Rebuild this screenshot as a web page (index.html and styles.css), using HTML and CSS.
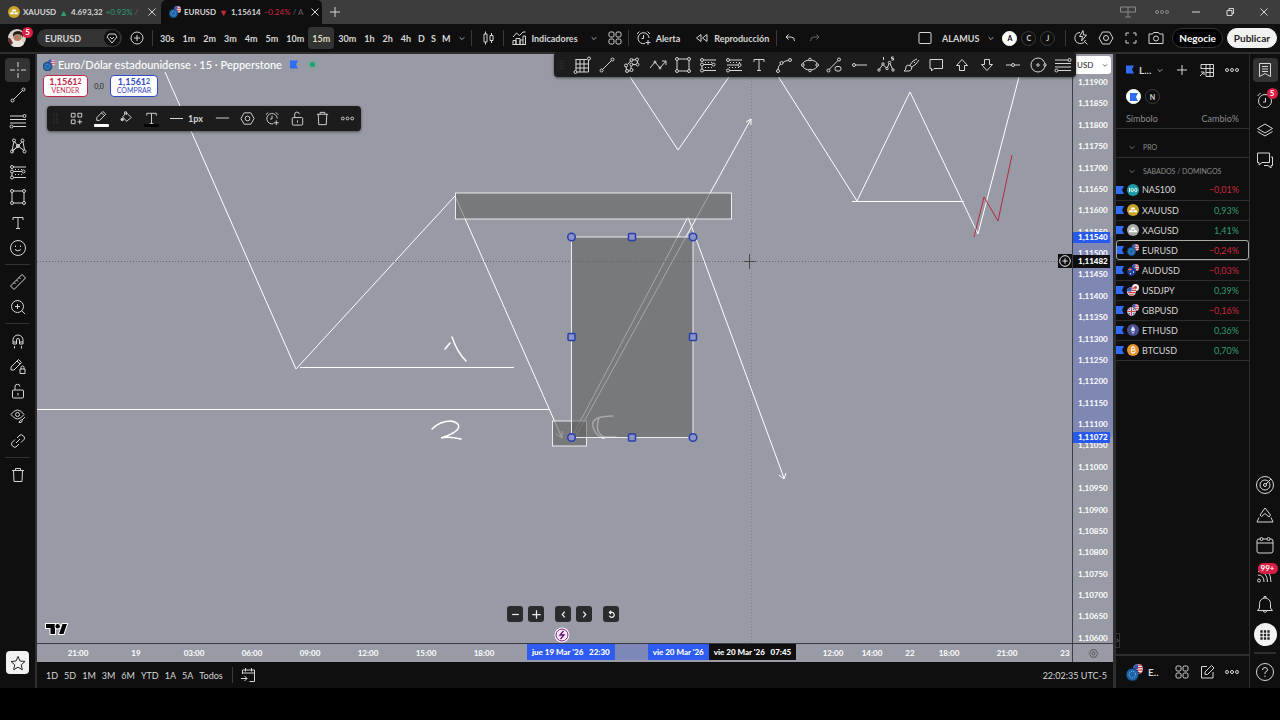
FILE: index.html
```html
<!DOCTYPE html>
<html lang="es">
<head>
    <meta charset="UTF-8">
    <meta name="viewport" content="width=device-width, initial-scale=1.0">
    <title>EURUSD 1,15614 −0.24%</title>
    <link rel="stylesheet" href="styles.css">
</head>
<body>
    <!-- Icon sprite -->
    <svg class="sprite" aria-hidden="true">
        <symbol id="i-cross" viewBox="0 0 18 18"><path d="M9 1v5M9 12v5M1 9h5M12 9h5M8 9h2"/></symbol>
        <symbol id="i-line" viewBox="0 0 18 18"><path d="M4.5 13.5l9-9"/><circle cx="3.5" cy="14.5" r="1.5"/><circle cx="14.5" cy="3.5" r="1.5"/></symbol>
        <symbol id="i-fib" viewBox="0 0 18 18"><path d="M1 4h13M1 7.500h16M1 11h16M4 14.500h13"/><circle cx="15.500" cy="4" r="1.500"/><circle cx="2.500" cy="14.500" r="1.500"/></symbol>
        <symbol id="i-pattern" viewBox="0 0 18 18"><path d="M3 13.500L5 4.500M3.500 14L13 5M5.500 4.500L8.500 8.500L15 13.500M14 4.500L15.500 13M3 14.500L9 9.500"/><circle cx="3" cy="14.500" r="1.500"/><circle cx="5" cy="3.500" r="1.500"/><circle cx="13.500" cy="3.500" r="1.500"/><circle cx="15.500" cy="14.500" r="1.500"/><circle cx="9" cy="9" r="1.500"/></symbol>
        <symbol id="i-long" viewBox="0 0 18 18"><path d="M4.500 4H17M4.500 8.500H13M4.500 14.500H17M3 10v3"/><path d="M6 6.500h9M6 11.500h9" stroke-dasharray="1 2"/><circle cx="3" cy="4" r="1.500"/><circle cx="3" cy="8.500" r="1.500"/><circle cx="14.500" cy="8.500" r="1.500"/><circle cx="3" cy="14.500" r="1.500"/></symbol>
        <symbol id="i-range" viewBox="0 0 18 18"><path d="M4.500 4H17M2 9h11M4.500 14.500H17"/><path d="M4 11.500h12M5 6.500h10" stroke-dasharray="1 2"/><circle cx="3" cy="4" r="1.500"/><circle cx="14.500" cy="9" r="1.500"/><circle cx="3" cy="14.500" r="1.500"/></symbol>
        <symbol id="i-rect" viewBox="0 0 18 18"><path d="M4.500 3h9M4.500 15h9M3 4.500v9M15 4.500v9"/><circle cx="3" cy="3" r="1.500"/><circle cx="15" cy="3" r="1.500"/><circle cx="3" cy="15" r="1.500"/><circle cx="15" cy="15" r="1.500"/></symbol>
        <symbol id="i-text" viewBox="0 0 18 18"><path d="M4 6V3.500h10V6M9 3.500v11M7 14.500h4"/></symbol>
        <symbol id="i-smile" viewBox="0 0 18 18"><circle cx="9" cy="9" r="7.500"/><path d="M6 10.500q3 3 6 0M6.500 6.500v1.500M11.500 6.500v1.500"/></symbol>
        <symbol id="i-ruler" viewBox="0 0 18 18"><path d="M1.500 13L13 1.500L16.500 5L5 16.500zM5 9.500l1.500 1.500M7.500 7l1.500 1.500M10 4.500l1.500 1.500"/></symbol>
        <symbol id="i-zoom" viewBox="0 0 18 18"><circle cx="8.500" cy="8.500" r="6"/><path d="M13 13l3 3M8.500 6v5M6 8.500h5"/></symbol>
        <symbol id="i-magnet" viewBox="0 0 18 18"><path d="M4 12V8a5 5 0 0 1 10 0v4h-3.500V8a1.500 1.500 0 0 0-3 0v4zM4 10h3.500M10.500 10H14M5.500 14v2.500M12.500 14v2.500"/></symbol>
        <symbol id="i-penlock" viewBox="0 0 18 18"><path d="M2 13v-3l7.500-7.500l3 3L5 13zM8 4l3 3M11 12h5v4.500h-5zM12 12v-1.500a1.500 1.500 0 0 1 3 0V12"/></symbol>
        <symbol id="i-lock" viewBox="0 0 18 18"><rect x="3.500" y="8" width="11" height="8" rx="1"/><path d="M6 8V5a2.500 2.500 0 0 1 5-.5M9 11v2.500"/></symbol>
        <symbol id="i-eye" viewBox="0 0 18 18"><path d="M2 7.500q6.500-9 13 0q-6.500 9-13 0z"/><circle cx="8.500" cy="7.500" r="2"/><path d="M10 15.500q1-3 3-2.500l3-3M10 15.500q3 .5 3.500-2"/></symbol>
        <symbol id="i-link" viewBox="0 0 18 18"><path d="M8 6l3-3q1.500-1 3.500 1t.500 3.500l-3 3M10 12l-3 3q-1.500 1-3.500-1T3 10.500l3-3M7 11l4-4"/></symbol>
        <symbol id="i-trash" viewBox="0 0 18 18"><path d="M3 4.500h12M6.500 4.500V2.500h5v2M4.500 4.500l.5 11h8l.5-11"/></symbol>
        <symbol id="i-star" viewBox="0 0 18 18"><path d="M9 2.500l2 4.500 5 .5-3.700 3.300 1 4.900L9 13.200l-4.300 2.500 1-4.900L2 7.500 7 7z"/></symbol>
        <symbol id="i-plus" viewBox="0 0 18 18"><path d="M9 4v10M4 9h10"/></symbol>
        <symbol id="i-pluscircle" viewBox="0 0 18 18"><circle cx="9" cy="9" r="6"/><path d="M9 6v6M6 9h6"/></symbol>
        <symbol id="i-diamond" viewBox="0 0 18 18"><circle cx="9" cy="9" r="8" fill="#0f0f0f" stroke="none"/><path d="M4 8l2-3h6l2 3-5 6zM7 8l2 2 2-2"/></symbol>
        <symbol id="i-down" viewBox="0 0 18 18"><path d="M6 8l3 3 3-3"/></symbol>
        <symbol id="i-left" viewBox="0 0 18 18"><path d="M10.500 5.500L7.500 9l3 3.500"/></symbol>
        <symbol id="i-right" viewBox="0 0 18 18"><path d="M7.500 5.500l3 3.500-3 3.500"/></symbol>
        <symbol id="i-minus" viewBox="0 0 18 18"><path d="M5 9h8"/></symbol>
        <symbol id="i-dash" viewBox="0 0 18 18"><path d="M2 8.500h14"/></symbol>
        <symbol id="i-reset" viewBox="0 0 18 18"><path d="M6.500 6.500H10a3 3 0 1 1-3.500 4M8.500 4.500l-2 2 2 2"/></symbol>
        <symbol id="i-close" viewBox="0 0 18 18"><path d="M5.500 5.500l7 7M12.500 5.500l-7 7"/></symbol>
        <symbol id="i-restore" viewBox="0 0 18 18"><path d="M6 7.500h5v5H6zM8 7.500v-2h4.500v5H11"/></symbol>
        <symbol id="i-layout" viewBox="0 0 18 18"><path d="M1.500 4h15v5h-15zM9 4v10M6 14h6"/></symbol>
        <symbol id="i-dots" viewBox="0 0 18 18"><circle cx="4" cy="9" r="1.500"/><circle cx="9" cy="9" r="1.500"/><circle cx="14" cy="9" r="1.500"/></symbol>
        <symbol id="i-candle" viewBox="0 0 18 18"><path d="M5 5h3v8H5zM6.500 2.500V5M6.500 13v2.500M11 6.500h3v5h-3zM12.500 4v2.500M12.500 11.500V14"/></symbol>
        <symbol id="i-ind" viewBox="0 0 18 18"><path d="M3 15.500v-4h3v4M6 15.500V9.500h4v6M10 15.500v-4M13 15.500V7h2.500v8.500M10 11h3M2.500 15.500h13.500M3 8l3.500-4 3 2.500L13 3h2.500"/></symbol>
        <symbol id="i-four" viewBox="0 0 18 18"><rect x="3" y="3" width="5" height="5" rx="1.500"/><rect x="10" y="3" width="5" height="5" rx="1.500"/><rect x="3" y="10" width="5" height="5" rx="1.500"/><rect x="10" y="10" width="5" height="5" rx="1.500"/></symbol>
        <symbol id="i-alarm" viewBox="0 0 18 18"><path d="M10 14.500A5.500 5.500 0 1 1 14 9M8.500 6v3.500H6.500M2 5l2.500-2.500M12.500 2.500L15 5M13 11v5M10.500 13.500h5"/></symbol>
        <symbol id="i-clock" viewBox="0 0 18 18"><circle cx="9" cy="10" r="6.500"/><path d="M9.500 7v4H7M1.500 5l3-3"/></symbol>
        <symbol id="i-replay" viewBox="0 0 18 18"><path d="M8 5.500v7L3.500 9zM14 5.500v7L9.500 9z"/></symbol>
        <symbol id="i-undo" viewBox="0 0 18 18"><path d="M5 8h5q3.500 0 3.500 4M7.500 5.500L5 8l2.500 2.500"/></symbol>
        <symbol id="i-redo" viewBox="0 0 18 18"><path d="M13 8H8q-3.500 0-3.500 4M10.500 5.500L13 8l-2.500 2.500"/></symbol>
        <symbol id="i-box" viewBox="0 0 18 18"><rect x="3" y="3.500" width="12" height="11" rx="1"/></symbol>
        <symbol id="i-quick" viewBox="0 0 18 18"><path d="M8 3.500a5.500 5.500 0 1 0 5.500 7.500M12.500 12.500l3 3M11 1.500L7.500 7.500H10.500l-1 4.500L14.500 6H11.500z"/></symbol>
        <symbol id="i-hex" viewBox="0 0 18 18"><path d="M5.500 3h7L16 9l-3.500 6h-7L2 9z"/><circle cx="9" cy="9" r="2.500"/></symbol>
        <symbol id="i-full" viewBox="0 0 18 18"><path d="M4 7V4h3M11 4h3v3M14 11v3h-3M7 14H4v-3"/></symbol>
        <symbol id="i-camera" viewBox="0 0 18 18"><path d="M2 5h3.500l1-1.500h5l1 1.500H16v9.500H2z"/><circle cx="9" cy="9.500" r="2.500"/></symbol>
        <symbol id="i-gridbox" viewBox="0 0 18 18"><path d="M2.500 3.500H14M2.500 8h13M2.500 12h13M4 16h11.500M3 3v12M7 3v13M11 3v13M15.500 4v12"/><circle cx="16" cy="2.500" r="1.500"/><circle cx="2.500" cy="16" r="1.500"/></symbol>
        <symbol id="i-brushpath" viewBox="0 0 18 18"><path d="M3.500 13.500L3 10.500M4.500 8.500L8 4.500M9.500 4L13 3.500M14.500 5v2M13 8.500H9.500M8 10v3M5.500 15H7"/><circle cx="3" cy="9.500" r="1.500"/><circle cx="4" cy="15" r="1.500"/><circle cx="8.500" cy="14" r="1.500"/><circle cx="14" cy="3.500" r="1.500"/><circle cx="14.500" cy="8.500" r="1.500"/><circle cx="8.500" cy="8.500" r="1.500"/><circle cx="8.500" cy="4" r="1.500"/></symbol>
        <symbol id="i-zig" viewBox="0 0 18 18"><path d="M1 12l5-6 5 6 6-7M13 5h4v4"/><circle cx="6" cy="6" r="1"/><circle cx="11" cy="12" r="1"/></symbol>
        <symbol id="i-curve" viewBox="0 0 18 18"><path d="M3 13.500q0-3 2.500-5.500M8 6.500q2-2 5.500-2"/><circle cx="3" cy="15" r="1.500"/><circle cx="6.500" cy="7" r="1.500"/><circle cx="15" cy="4" r="1.500"/></symbol>
        <symbol id="i-ellipse" viewBox="0 0 18 18"><ellipse cx="9" cy="9" rx="7.500" ry="5"/><g fill="#1c1c1c"><circle cx="1.800" cy="9" r="1.300"/><circle cx="16.200" cy="9" r="1.300"/><circle cx="9" cy="3.500" r="1.300"/><circle cx="9" cy="14.500" r="1.300"/></g></symbol>
        <symbol id="i-lineshape" viewBox="0 0 18 18"><path d="M3 13.500l9-9"/><circle cx="2.500" cy="14.500" r="1.500"/><circle cx="13" cy="3.500" r="1.500"/><rect x="9" y="10.500" width="6" height="4.500" rx="2"/></symbol>
        <symbol id="i-ray" viewBox="0 0 18 18"><path d="M4.500 9H16"/><circle cx="3" cy="9" r="1.500"/></symbol>
        <symbol id="i-elliott" viewBox="0 0 18 18"><path d="M2.500 13L5.500 9M6.500 9l3 3M10.500 11.500l1.500-4M13 7.500l2.500 5.500M6.500 1v3M16.500 1h-2v1.500h2V4h-2"/><circle cx="2" cy="14" r="1.200"/><circle cx="6" cy="8" r="1.200"/><circle cx="10" cy="12.500" r="1.200"/><circle cx="12.500" cy="6.500" r="1.200"/><circle cx="16" cy="14" r="1.200"/></symbol>
        <symbol id="i-brush" viewBox="0 0 18 18"><path d="M2 15q2-1 2-4t5-1q2 4-2 5zM8 9l3-4 4-2M10 11l4-3 3-4M12 6l1 1"/></symbol>
        <symbol id="i-callout" viewBox="0 0 18 18"><path d="M3 3.500h12.500v9H7L4.500 15v-2.500H3z"/></symbol>
        <symbol id="i-up" viewBox="0 0 18 18"><path d="M9 3.500L14.500 9.500H11.500v5h-5v-5h-3z"/></symbol>
        <symbol id="i-dn" viewBox="0 0 18 18"><path d="M9 14.500L14.500 8.500H11.500v-5h-5v5h-3z"/></symbol>
        <symbol id="i-hline" viewBox="0 0 18 18"><path d="M2 9h5.500M10.500 9H16"/><circle cx="9" cy="9" r="1.500"/></symbol>
        <symbol id="i-circle" viewBox="0 0 18 18"><circle cx="9" cy="9" r="7"/><circle cx="9" cy="9" r="1.200"/><circle cx="16" cy="9" r="1.200" fill="#1c1c1c"/></symbol>
        <symbol id="i-pencil" viewBox="0 0 18 18"><path d="M4 11V8l6.500-6.500L13.500 4.500L7 11zM9 3l3 3"/></symbol>
        <symbol id="i-bucket" viewBox="0 0 18 18"><path d="M5 7l4-4 5 5-5 4zM7 5V2h2v3"/><circle cx="4.500" cy="10" r="1.300" fill="currentColor"/></symbol>
        <symbol id="i-apps" viewBox="0 0 18 18"><path d="M3.500 3.500h4v4h-4zM10.500 3.500h4v4h-4zM3.500 10.500h4v4h-4zM12.500 10v5M10 12.500h5"/></symbol>
        <symbol id="i-grip" viewBox="0 0 18 18"><path d="M7.500 4v10M10.500 4v10" stroke-dasharray="1 2"/></symbol>
        <symbol id="i-goto" viewBox="0 0 18 18"><path d="M3.500 8V4h12v11.500h-5M3.500 7h12M6.500 2v3.500M12.500 2v3.500M2 12.500h6M5.500 10L8 12.500 5.500 15"/></symbol>
        <symbol id="i-note" viewBox="0 0 18 18"><path d="M9 3.500H3.500v11.500H15V9M7 11.500V9l6.500-6.500L16 5l-6.500 6.500z"/></symbol>
        <symbol id="i-table" viewBox="0 0 18 18"><path d="M3 8V3.500h12.500v12H8M3 7.500h12.500M8 11.500h7.500M8 3.500v12M12 3.500v12M2 15l4-4M3 11h3v3"/></symbol>
        <symbol id="i-list" viewBox="0 0 18 18"><path d="M3.500 2.500h11v13L9 12.500l-5.500 3zM6 5.500h6M6 8h6M6 10.500h6"/></symbol>
        <symbol id="i-layers" viewBox="0 0 18 18"><path d="M9 3l7.500 4.500L9 12 1.500 7.500zM1.500 10.500L9 15l7.500-4.500"/></symbol>
        <symbol id="i-chat" viewBox="0 0 18 18"><path d="M1.500 2h12v9.500H6L3 14v-2.500H1.500zM15 6h1.500v8.500H15V17l-3-2.500H8"/></symbol>
        <symbol id="i-target" viewBox="0 0 18 18"><circle cx="9" cy="9" r="8.500"/><circle cx="9" cy="9" r="5"/><circle cx="9" cy="9" r="1.500"/><path d="M10 8l5-5"/></symbol>
        <symbol id="i-pyramid" viewBox="0 0 18 18"><path d="M9 2L4 9l1.500 1.500L9 7.500l4 3.500 1.500-2zM3 11.500L1 16h16l-2-4.500"/></symbol>
        <symbol id="i-cal" viewBox="0 0 18 18"><rect x="1" y="3" width="16" height="14" rx="2"/><path d="M1 7h16"/><circle cx="5.500" cy="3" r="1.500" fill="#0f0f0f"/><circle cx="12.500" cy="3" r="1.500" fill="#0f0f0f"/></symbol>
        <symbol id="i-feed" viewBox="0 0 18 18"><circle cx="3" cy="14.500" r="1.500"/><path d="M2 9q6 0 6 7M2 5.500q9.500 0 9.500 10.500M2 2q13 0 13 14"/></symbol>
        <symbol id="i-bell" viewBox="0 0 18 18"><path d="M1.500 14.500h15L14.500 12V7.500a5.500 5.500 0 0 0-11 0V12zM7 15q2 3 4 0M8 2V.5h2V2"/></symbol>
        <symbol id="i-help" viewBox="0 0 18 18"><circle cx="9" cy="9" r="8.500"/><path d="M6.500 7q0-2.500 2.500-2.500T11.500 7Q11.500 8 9 9.500V11M9 12.500V14"/></symbol>
        <symbol id="i-nine" viewBox="0 0 18 18"><path d="M3 4.500h12M3 9h12M3 13.500h12" stroke-width="3" stroke-dasharray="3 1.500"/></symbol>

        <symbol id="c-gold" viewBox="0 0 12 12"><circle cx="6" cy="6" r="6" fill="#c9a227"/><path d="M4.500 3.500h3l.8 2h-4.600zM2.500 6.200h3l.5 2H1.800zM6.600 6.200h3l.6 2H6.200z" fill="#fff"/></symbol>
        <symbol id="c-silver" viewBox="0 0 12 12"><circle cx="6" cy="6" r="6" fill="#a9abad"/><path d="M4.500 3.500h3l.8 2h-4.600zM2.500 6.200h3l.5 2H1.800zM6.600 6.200h3l.6 2H6.200z" fill="#fff"/></symbol>
        <symbol id="c-us" viewBox="0 0 8 8"><circle cx="4" cy="4" r="4" fill="#eee"/><path d="M4 1h3M4 3h4M1 5h7M2 7h4" stroke="#d33b4b"/><path d="M0 4a4 4 0 0 1 4-4v4z" fill="#3655b5"/></symbol>
        <symbol id="c-eur" viewBox="0 0 12 12"><use href="#c-us" x="5" y="0" width="7" height="7"/><circle cx="4.500" cy="7.500" r="4.500" fill="#1c62a8" stroke="#0f0f0f" stroke-width=".4"/><circle cx="4.500" cy="7.500" r="2.300" fill="none" stroke="#8fc3ee" stroke-width=".7" stroke-dasharray=".8 .8"/></symbol>
        <symbol id="c-aud" viewBox="0 0 12 12"><use href="#c-us" x="5" y="0" width="7" height="7"/><circle cx="4.500" cy="7.500" r="4.500" fill="#1b3e9c" stroke="#0f0f0f" stroke-width=".4"/><path d="M1 5.500h4M3 3.500v4" stroke="#e66"/><circle cx="6.500" cy="8" r=".7" fill="#fff"/><circle cx="3.500" cy="9.700" r=".7" fill="#fff"/></symbol>
        <symbol id="c-jpy" viewBox="0 0 12 12"><circle cx="8.500" cy="3.500" r="3.500" fill="#f4f4f4"/><circle cx="8.500" cy="3.500" r="1.500" fill="#d33"/><use href="#c-us" x="0" y="3" width="9" height="9"/></symbol>
        <symbol id="c-gbp" viewBox="0 0 12 12"><use href="#c-us" x="5" y="0" width="7" height="7"/><circle cx="4.500" cy="7.500" r="4.500" fill="#a9aec6" stroke="#0f0f0f" stroke-width=".4"/><path d="M1.500 4.500l6 6M7.500 4.500l-6 6" stroke="#5a6a9c"/><path d="M.2 7.500h8.600M4.500 3.200v8.600" stroke="#fff" stroke-width="2"/><path d="M.2 7.500h8.600M4.500 3.200v8.600" stroke="#c44"/></symbol>
        <symbol id="c-eth" viewBox="0 0 12 12"><circle cx="6" cy="6" r="6" fill="#4a4f8f"/><path d="M6 2l2.300 4L6 7.500 3.700 6zM3.900 7L6 8.400 8.100 7 6 10z" fill="#dfe2ff"/></symbol>
        <symbol id="c-nas" viewBox="0 0 12 12"><circle cx="6" cy="6" r="6" fill="#1c9aa8"/><path d="M2.500 4v4" stroke="#fff"/><ellipse cx="5.200" cy="6" rx="1.200" ry="1.800" fill="none" stroke="#fff" stroke-width=".8"/><ellipse cx="8.800" cy="6" rx="1.200" ry="1.800" fill="none" stroke="#fff" stroke-width=".8"/></symbol>
        <symbol id="c-btc" viewBox="0 0 12 12"><circle cx="6" cy="6" r="6" fill="#e8942c"/><path d="M4.500 3.300h2a1.200 1.200 0 0 1 0 2.600h-2zM4.500 5.900h2.400a1.300 1.300 0 0 1 0 2.800H4.500zM5.500 2.300v1M6.700 2.300v1M5.500 8.700v1M6.700 8.700v1" fill="none" stroke="#fff" stroke-width=".9"/></symbol>
        <symbol id="c-flag" viewBox="0 0 8 8"><path d="M0 0h8L6 4l2 4H0z" fill="#2f6df6"/></symbol>
    </svg>

    <!-- Window tabs -->
    <header class="tabs">
        <div class="tab">
            <svg class="coin"><use href="#c-gold"/></svg>
            <b>XAUUSD</b><i class="up">▲</i><b>4.693,32</b><span class="up tab-change">+0.93% <em>/</em></span>
            <button class="icon tab-close" aria-label="Cerrar XAUUSD"><svg><use href="#i-close"/></svg></button>
        </div>
        <div class="tab active">
            <svg class="coin"><use href="#c-eur"/></svg>
            <b>EURUSD</b><i class="down">▼</i><b>1,15614</b><span class="down tab-change">−0.24% <em>/ A</em></span>
            <button class="icon tab-close" aria-label="Cerrar EURUSD"><svg><use href="#i-close"/></svg></button>
        </div>
        <button class="icon tab-new" aria-label="Nueva pestaña"><svg><use href="#i-plus"/></svg></button>
        <div class="window-buttons">
            <button class="icon" aria-label="Disposición"><svg><use href="#i-layout"/></svg></button>
            <button class="icon" aria-label="Más"><svg><use href="#i-dots"/></svg></button>
            <button class="icon" aria-label="Minimizar"><svg><use href="#i-minus"/></svg></button>
            <button class="icon" aria-label="Restaurar"><svg><use href="#i-restore"/></svg></button>
            <button class="icon" aria-label="Cerrar"><svg><use href="#i-close"/></svg></button>
        </div>
    </header>

    <!-- Top toolbar -->
    <nav class="topbar">
        <button class="avatar" aria-label="Perfil">
            <svg viewBox="0 0 18 18"><circle cx="9" cy="9" r="9" fill="#d8cfc8"/><path d="M2 15q1-6 6-6t8 6a9 9 0 0 1-14 0z" fill="#e9e4df"/><circle cx="9.500" cy="8" r="4" fill="#b57f66"/><path d="M5 8q-1-6 5-6t5 7q-1-4-5-4-4 0-5 3z" fill="#241a18"/><path d="M0 9q2-1 5 5l-2 2q-3-2-3-7z" fill="#6c2d2d"/></svg>
            <span class="badge">5</span>
        </button>
        <label class="search"><input type="text" value="EURUSD" aria-label="Símbolo"><svg><use href="#i-diamond"/></svg></label>
        <button class="icon compare" aria-label="Comparar"><svg><use href="#i-pluscircle"/></svg></button>
        <span class="sep"></span>
        <div class="intervals">
            <button>30s</button><button>1m</button><button>2m</button><button>3m</button><button>4m</button><button>5m</button><button>10m</button><button class="on">15m</button><button>30m</button><button>1h</button><button>2h</button><button>4h</button><button class="short">D</button><button class="short">S</button><button class="short">M</button>
        </div>
        <button class="icon small" aria-label="Intervalos"><svg><use href="#i-down"/></svg></button>
        <span class="sep"></span>
        <button class="icon wide" aria-label="Velas"><svg><use href="#i-candle"/></svg></button>
        <span class="sep"></span>
        <button class="labelled"><svg><use href="#i-ind"/></svg>Indicadores</button>
        <button class="icon small" aria-label="Favoritos"><svg><use href="#i-down"/></svg></button>
        <button class="icon" aria-label="Plantillas"><svg><use href="#i-four"/></svg></button>
        <span class="sep"></span>
        <button class="labelled"><svg><use href="#i-alarm"/></svg>Alerta</button>
        <button class="labelled"><svg><use href="#i-replay"/></svg>Reproducción</button>
        <span class="sep"></span>
        <button class="icon" aria-label="Deshacer"><svg><use href="#i-undo"/></svg></button>
        <button class="icon faded" aria-label="Rehacer"><svg><use href="#i-redo"/></svg></button>

        <div class="topbar-right">
            <button class="labelled layout-name"><svg><use href="#i-box"/></svg>ALAMUS</button>
            <button class="icon small" aria-label="Diseños"><svg><use href="#i-down"/></svg></button>
            <button class="letter on">A</button><button class="letter">C</button><button class="letter">J</button>
            <span class="sep"></span>
            <button class="icon" aria-label="Búsqueda rápida"><svg><use href="#i-quick"/></svg></button>
            <button class="icon" aria-label="Configuración"><svg><use href="#i-hex"/></svg></button>
            <button class="icon" aria-label="Pantalla completa"><svg><use href="#i-full"/></svg></button>
            <button class="icon" aria-label="Captura"><svg><use href="#i-camera"/></svg></button>
            <button class="pill dark">Negocie</button>
            <button class="pill light">Publicar</button>
        </div>
    </nav>

    <main class="workspace">
        <!-- Drawing tools -->
        <aside class="tools">
            <div class="tool-group first">
                <button class="icon on" aria-label="Cursor"><svg><use href="#i-cross"/></svg></button>
                <button class="icon" aria-label="Línea"><svg><use href="#i-line"/></svg></button>
                <button class="icon" aria-label="Fibonacci"><svg><use href="#i-fib"/></svg></button>
                <button class="icon" aria-label="Patrones"><svg><use href="#i-pattern"/></svg></button>
                <button class="icon" aria-label="Proyección"><svg><use href="#i-long"/></svg></button>
                <button class="icon" aria-label="Formas"><svg><use href="#i-rect"/></svg></button>
                <button class="icon" aria-label="Texto"><svg><use href="#i-text"/></svg></button>
                <button class="icon" aria-label="Iconos"><svg><use href="#i-smile"/></svg></button>
            </div>
            <div class="tool-group">
                <button class="icon" aria-label="Medir"><svg><use href="#i-ruler"/></svg></button>
                <button class="icon" aria-label="Ampliar"><svg><use href="#i-zoom"/></svg></button>
            </div>
            <div class="tool-group">
                <button class="icon" aria-label="Imán"><svg><use href="#i-magnet"/></svg></button>
                <button class="icon" aria-label="Modo dibujo"><svg><use href="#i-penlock"/></svg></button>
                <button class="icon" aria-label="Bloquear"><svg><use href="#i-lock"/></svg></button>
                <button class="icon" aria-label="Ocultar"><svg><use href="#i-eye"/></svg></button>
                <button class="icon" aria-label="Enlazar"><svg><use href="#i-link"/></svg></button>
            </div>
            <div class="tool-group">
                <button class="icon" aria-label="Eliminar"><svg><use href="#i-trash"/></svg></button>
            </div>
            <button class="icon favourite" aria-label="Favoritos"><svg><use href="#i-star"/></svg></button>
        </aside>

        <section class="chart">
            <div class="plot-row">
                <div class="plot">
                    <svg class="drawings" viewBox="37 54 1035 589" preserveAspectRatio="xMinYMin slice">
                        <path class="crosshair faint" d="M751.500 54V643"/>
                        <g class="stroke">
                            <path d="M165 72L296 369L455 196L562 438M556 434l6 4v-7"/>
                            <path d="M300 367.500H514M37 409.500H549"/>
                            <path d="M573 435L688 217L784 478M779 475l5 4 2-6"/>
                            <path d="M576 436L751 119M746 122l5-3v6"/>
                            <path d="M615 54L678 150L745 54M764 54L857 201L910 92L978 234L1025 54M852 201.500H964"/>
                        </g>
                        <g class="stroke hand">
                            <path d="M445 349L450 343M452 337Q457 352 466 361"/>
                            <path d="M432 429Q440 421 451 421Q461 423 458 429Q454 434 441 438Q449 436 461 439"/>
                            <path d="M613 416Q590 416 593 427Q596 437 604 438M599 418Q594 432 604 437H616"/>
                        </g>
                        <path class="red-line" d="M974 237L984 197L998 221L1012 155"/>
                        <path class="crosshair" d="M37 261.500H1072"/>
                        <g class="zone">
                            <rect x="455.500" y="193" width="276" height="26"/>
                            <rect x="552.500" y="421" width="34" height="25"/>
                            <rect x="571.500" y="237" width="121.500" height="200.500"/>
                        </g>
                        <path d="M749.500 254v15M744 261.500h12" stroke="#494843"/>
                        <g class="handles">
                            <circle cx="571.500" cy="237" r="3.800"/><circle cx="693" cy="237" r="3.800"/><circle cx="571.500" cy="437.500" r="3.800"/><circle cx="693" cy="437.500" r="3.800"/>
                            <rect x="628.500" y="233.500" width="7" height="7" rx="1"/><rect x="628.500" y="434" width="7" height="7" rx="1"/><rect x="568" y="333.500" width="7" height="7" rx="1"/><rect x="689.500" y="333.500" width="7" height="7" rx="1"/>
                        </g>
                    </svg>
                    <div class="legend">
                        <h1><svg class="coin"><use href="#c-eur"/></svg>Euro/Dólar estadounidense · 15 · Pepperstone<svg class="flag"><use href="#c-flag"/></svg><span class="status"></span></h1>
                        <div class="quotes">
                            <button class="quote sell"><b>1,1561<sup>2</sup></b>VENDER</button>
                            <span>0,0</span>
                            <button class="quote buy"><b>1,1561<sup>2</sup></b>COMPRAR</button>
                        </div>
                    </div>
                    <div class="floating edit-bar">
                        <svg class="grip"><use href="#i-grip"/></svg>
                        <button class="icon" aria-label="Plantilla"><svg><use href="#i-apps"/></svg></button>
                        <button class="icon ink" aria-label="Color de línea"><svg><use href="#i-pencil"/></svg></button>
                        <button class="icon" aria-label="Relleno"><svg><use href="#i-bucket"/></svg></button>
                        <button class="icon ink black" aria-label="Color de texto"><svg><use href="#i-text"/></svg></button>
                        <button class="width">1px</button>
                        <button class="icon" aria-label="Estilo"><svg><use href="#i-dash"/></svg></button>
                        <button class="icon" aria-label="Configuración"><svg><use href="#i-hex"/></svg></button>
                        <button class="icon" aria-label="Alerta"><svg><use href="#i-alarm"/></svg></button>
                        <button class="icon" aria-label="Bloquear"><svg><use href="#i-lock"/></svg></button>
                        <button class="icon" aria-label="Eliminar"><svg><use href="#i-trash"/></svg></button>
                        <button class="icon" aria-label="Más"><svg><use href="#i-dots"/></svg></button>
                    </div>
                    <div class="zoom-bar">
                        <button class="icon" aria-label="Alejar"><svg><use href="#i-minus"/></svg></button>
                        <button class="icon" aria-label="Acercar"><svg><use href="#i-plus"/></svg></button>
                        <button class="icon apart" aria-label="Izquierda"><svg><use href="#i-left"/></svg></button>
                        <button class="icon" aria-label="Derecha"><svg><use href="#i-right"/></svg></button>
                        <button class="icon apart" aria-label="Restablecer"><svg><use href="#i-reset"/></svg></button>
                    </div>
                    <svg class="event" viewBox="0 0 16 16"><circle cx="8" cy="8" r="7.500" fill="#fff"/><circle cx="8" cy="8" r="6" fill="#fbe6fb" stroke="#7b2382"/><path d="M9.500 4L6 8h4l-3.500 4" fill="none" stroke="#5d1466" stroke-width="1.300"/></svg>
                    <svg class="logo" viewBox="0 0 24 14"><g fill="#000" stroke="#fff" stroke-width="2" paint-order="stroke"><path d="M2 2h9v10H6.500V6H2z"/><path d="M15 12h4.500L23 2h-4.500z"/><circle cx="13.700" cy="4.200" r="2.200"/></g></svg>
                    <button class="icon add-price" aria-label="Añadir en 1,11482"><svg><use href="#i-pluscircle"/></svg></button>
                </div>
                <div class="price-axis">
                    <span class="tint"></span>
                    <span>1,11900</span><span>1,11850</span><span>1,11800</span><span>1,11750</span><span>1,11700</span><span>1,11650</span><span>1,11600</span><span>1,11550</span><span>1,11500</span><span>1,11450</span><span>1,11400</span><span>1,11350</span><span>1,11300</span><span>1,11250</span><span>1,11200</span><span>1,11150</span><span>1,11100</span><span>1,11050</span><span>1,11000</span><span>1,10950</span><span>1,10900</span><span>1,10850</span><span>1,10800</span><span>1,10750</span><span>1,10700</span><span>1,10650</span><span>1,10600</span>
                    <b class="price-tag top">1,11540</b>
                    <b class="price-tag cursor">1,11482</b>
                    <b class="price-tag bottom">1,11072</b>
                    <div class="currency"><select aria-label="Moneda"><option>USD</option></select><svg><use href="#i-down"/></svg></div>
                </div>
                <div class="floating draw-bar">
                    <svg class="grip"><use href="#i-grip"/></svg>
                    <button class="icon" aria-label="Caja de Gann"><svg><use href="#i-gridbox"/></svg></button>
                    <button class="icon" aria-label="Línea"><svg><use href="#i-line"/></svg></button>
                    <button class="icon" aria-label="Forma libre"><svg><use href="#i-brushpath"/></svg></button>
                    <button class="icon" aria-label="Trayectoria"><svg><use href="#i-zig"/></svg></button>
                    <button class="icon" aria-label="Rectángulo"><svg><use href="#i-rect"/></svg></button>
                    <button class="icon" aria-label="Posición larga"><svg><use href="#i-long"/></svg></button>
                    <button class="icon" aria-label="Posición corta"><svg><use href="#i-range"/></svg></button>
                    <button class="icon" aria-label="Texto"><svg><use href="#i-text"/></svg></button>
                    <button class="icon" aria-label="Curva"><svg><use href="#i-curve"/></svg></button>
                    <button class="icon" aria-label="Elipse"><svg><use href="#i-ellipse"/></svg></button>
                    <button class="icon" aria-label="Línea informativa"><svg><use href="#i-lineshape"/></svg></button>
                    <button class="icon" aria-label="Rayo"><svg><use href="#i-ray"/></svg></button>
                    <button class="icon" aria-label="Onda de Elliott"><svg><use href="#i-elliott"/></svg></button>
                    <button class="icon" aria-label="Pincel"><svg><use href="#i-brush"/></svg></button>
                    <button class="icon" aria-label="Comentario"><svg><use href="#i-callout"/></svg></button>
                    <button class="icon" aria-label="Flecha arriba"><svg><use href="#i-up"/></svg></button>
                    <button class="icon" aria-label="Flecha abajo"><svg><use href="#i-dn"/></svg></button>
                    <button class="icon" aria-label="Línea horizontal"><svg><use href="#i-hline"/></svg></button>
                    <button class="icon" aria-label="Círculo"><svg><use href="#i-circle"/></svg></button>
                    <button class="icon" aria-label="Retroceso"><svg><use href="#i-fib"/></svg></button>
                </div>
            </div>
            <div class="time-row">
                <div class="time-axis">
                    <span>21:00</span><span>19</span><span>03:00</span><span>06:00</span><span>09:00</span><span>12:00</span><span>15:00</span><span>18:00</span><span>12:00</span><span>14:00</span><span>22</span><span>18:00</span><span>21:00</span><span>23</span>
                    <div class="time-tags">
                        <b>jue 19 Mar '26 &nbsp; 22:30</b><b class="between"></b><b>vie 20 Mar '26</b><b class="cursor">vie 20 Mar '26 &nbsp; 07:45</b>
                    </div>
                </div>
                <button class="icon axis-settings" aria-label="Ajustes de escala"><svg><use href="#i-hex"/></svg></button>
            </div>
            <footer class="ranges">
                <button>1D</button><button>5D</button><button>1M</button><button>3M</button><button>6M</button><button>YTD</button><button>1A</button><button>5A</button><button>Todos</button>
                <span class="sep"></span>
                <button class="icon" aria-label="Ir a"><svg><use href="#i-goto"/></svg></button>
                <button class="clock">22:02:35 UTC-5</button>
            </footer>
        </section>

        <!-- Watchlist -->
        <section class="watchlist">
            <div class="list-head">
                <svg class="flag"><use href="#c-flag"/></svg><b>L...</b>
                <button class="icon small" aria-label="Listas"><svg><use href="#i-down"/></svg></button>
                <button class="icon" aria-label="Añadir símbolo"><svg><use href="#i-plus"/></svg></button>
                <button class="icon" aria-label="Vista avanzada"><svg><use href="#i-table"/></svg></button>
                <button class="icon" aria-label="Más"><svg><use href="#i-dots"/></svg></button>
            </div>
            <div class="list-switch">
                <button class="letter on" aria-label="Lista azul"><svg class="flag"><use href="#c-flag"/></svg></button><button class="letter">N</button>
            </div>
            <table>
                <thead><tr><th>Símbolo</th><th>Cambio%</th></tr></thead>
                <tbody>
                    <tr class="group pro"><td colspan="2"><div><svg><use href="#i-down"/></svg>PRO</div></td></tr>
                    <tr class="group"><td colspan="2"><div><svg><use href="#i-down"/></svg>SABADOS / DOMINGOS</div></td></tr>
                    <tr><td><div><svg class="flag"><use href="#c-flag"/></svg><svg class="coin"><use href="#c-nas"/></svg>NAS100</div></td><td class="down">−0,01%</td></tr>
                    <tr><td><div><svg class="flag"><use href="#c-flag"/></svg><svg class="coin"><use href="#c-gold"/></svg>XAUUSD</div></td><td class="up">0,93%</td></tr>
                    <tr><td><div><svg class="flag"><use href="#c-flag"/></svg><svg class="coin"><use href="#c-silver"/></svg>XAGUSD</div></td><td class="up">1,41%</td></tr>
                    <tr class="selected"><td><div><svg class="flag"><use href="#c-flag"/></svg><svg class="coin"><use href="#c-eur"/></svg>EURUSD</div></td><td class="down">−0,24%</td></tr>
                    <tr><td><div><svg class="flag"><use href="#c-flag"/></svg><svg class="coin"><use href="#c-aud"/></svg>AUDUSD</div></td><td class="down">−0,03%</td></tr>
                    <tr><td><div><svg class="flag"><use href="#c-flag"/></svg><svg class="coin"><use href="#c-jpy"/></svg>USDJPY</div></td><td class="up">0,39%</td></tr>
                    <tr><td><div><svg class="flag"><use href="#c-flag"/></svg><svg class="coin"><use href="#c-gbp"/></svg>GBPUSD</div></td><td class="down">−0,16%</td></tr>
                    <tr><td><div><svg class="flag"><use href="#c-flag"/></svg><svg class="coin"><use href="#c-eth"/></svg>ETHUSD</div></td><td class="up">0,36%</td></tr>
                    <tr><td><div><svg class="flag"><use href="#c-flag"/></svg><svg class="coin"><use href="#c-btc"/></svg>BTCUSD</div></td><td class="up">0,70%</td></tr>
                </tbody>
            </table>
            <button class="collapse" aria-label="Contraer"><svg><use href="#i-right"/></svg></button>
            <div class="details">
                <svg class="coin large"><use href="#c-eur"/></svg><b>E..</b>
                <button class="icon" aria-label="Widgets"><svg><use href="#i-four"/></svg></button>
                <button class="icon" aria-label="Nota"><svg><use href="#i-note"/></svg></button>
                <button class="icon" aria-label="Más"><svg><use href="#i-dots"/></svg></button>
            </div>
        </section>

        <aside class="rail">
            <button class="icon on" aria-label="Lista de seguimiento"><svg><use href="#i-list"/></svg></button>
            <button class="icon" aria-label="Alertas"><svg><use href="#i-clock"/></svg><span class="badge">5</span></button>
            <button class="icon" aria-label="Capas"><svg><use href="#i-layers"/></svg></button>
            <button class="icon" aria-label="Chats"><svg><use href="#i-chat"/></svg></button>
            <button class="icon lower" aria-label="Analizador"><svg><use href="#i-target"/></svg></button>
            <button class="icon" aria-label="Pine"><svg><use href="#i-pyramid"/></svg></button>
            <button class="icon" aria-label="Calendario"><svg><use href="#i-cal"/></svg></button>
            <button class="icon" aria-label="Noticias"><svg><use href="#i-feed"/></svg><span class="badge">99+</span></button>
            <button class="icon" aria-label="Notificaciones"><svg><use href="#i-bell"/></svg></button>
            <button class="icon all" aria-label="Productos"><svg><use href="#i-nine"/></svg></button>
            <span class="rail-line"></span>
            <button class="icon" aria-label="Ayuda"><svg><use href="#i-help"/></svg></button>
        </aside>
    </main>
</body>
</html>
```
FILE: styles.css
```css
* {
    box-sizing: border-box;
}

body {
    margin: 0;
    padding-bottom: 32px;
    height: 100vh;
    display: flex;
    flex-direction: column;
    overflow: hidden;
    background: #000;
    color: #d6d6d6;
    font-family: Lato, "Open Sans", sans-serif;
    font-size: 10px;
}

button,
input,
select {
    margin: 0;
    padding: 0;
    border: 0;
    background: none;
    color: inherit;
    font: inherit;
}

button {
    cursor: pointer;
    white-space: nowrap;
}

svg {
    display: block;
    flex: none;
    width: 18px;
    height: 18px;
    fill: none;
    stroke: currentColor;
}

.sprite {
    position: absolute;
    width: 0;
    height: 0;
}

.coin {
    width: 12px;
    height: 12px;
    stroke: none;
}

.flag {
    width: 8px;
    height: 9px;
    stroke: none;
}

.icon {
    position: relative;
    display: flex;
    flex: none;
    align-items: center;
    justify-content: center;
    width: 25px;
    height: 24px;
    border-radius: 4px;
}

.icon.small {
    width: 18px;
}

.icon.small svg {
    width: 14px;
    height: 14px;
}

.badge {
    position: absolute;
    top: -5px;
    right: -1px;
    min-width: 11px;
    padding: 0 3px;
    border-radius: 6px;
    background: #d81f45;
    color: #fff;
    font-size: 8px;
    font-weight: bold;
    line-height: 11px;
}

.up {
    color: #2f9e73;
}

.down {
    color: #c9283f;
}

.sep {
    flex: none;
    width: 1px;
    height: 16px;
    background: #3a3a3a;
}

/* Window tabs */
.tabs {
    display: flex;
    align-items: center;
    height: 24px;
    background: #3d3d3d;
}

.tab {
    display: flex;
    align-items: center;
    gap: 3px;
    width: 161px;
    height: 24px;
    padding-left: 8px;
    background: #363636;
    font-size: 8px;
    white-space: nowrap;
}

.tab i {
    font-size: 9px;
    font-style: normal;
}

.tab em {
    color: #666;
    font-style: normal;
}

.tab.active {
    background: #0f0f0f;
    border-radius: 5px 5px 0 0;
}

.tab-close {
    width: 18px;
    margin-left: auto;
}

.window-buttons {
    display: flex;
    gap: 9px;
    margin-left: auto;
    padding-right: 4px;
}

.window-buttons .icon:nth-child(-n+2) {
    color: #8a8a8a;
}

/* Top toolbar */
.topbar {
    display: flex;
    align-items: center;
    height: 28px;
    background: #0f0f0f;
    font-size: 9px;
    font-weight: bold;
}

.avatar {
    position: relative;
    margin: 0 11px 0 8px;
}

.avatar svg {
    stroke: none;
}

.avatar .badge {
    top: -2px;
    right: -7px;
}

.search {
    display: flex;
    align-items: center;
    width: 85px;
    height: 18px;
    padding: 0 1px 0 8px;
    border-radius: 9px;
    background: #333;
}

.search input {
    flex: 1;
    min-width: 0;
}

.compare {
    width: 30px;
}

.intervals {
    display: flex;
    margin: 0 0 0 3px;
}

.intervals button {
    height: 22px;
    padding: 0 4px;
    border-radius: 4px;
}

.intervals .short {
    padding: 0 3px;
}

.intervals .on {
    background: #333;
    color: #d9dcc0;
}

.icon.wide {
    width: 31px;
}

.labelled {
    display: flex;
    align-items: center;
    gap: 3px;
    height: 24px;
    padding: 0 7px 0 6px;
}

.faded {
    color: #666;
}

.topbar-right {
    display: flex;
    align-items: center;
    margin-left: auto;
    padding-right: 3px;
}

.layout-name {
    gap: 8px;
    padding-right: 3px;
}

.letter {
    display: flex;
    align-items: center;
    justify-content: center;
    width: 15px;
    height: 15px;
    margin: 0 2px;
    border: 1px solid #3a3a3a;
    border-radius: 50%;
    font-size: 7px;
    font-weight: bold;
}

.letter.on {
    border-color: #fff;
    background: #fff;
    color: #000;
}

.topbar-right .sep {
    margin: 0 2px 0 8px;
}

.pill {
    height: 20px;
    margin-left: 4px;
    padding: 0 6px;
    border: 1px solid #333;
    border-radius: 10px;
    background: #000;
    color: #fff;
    font-size: 10px;
}

.pill.light {
    border-color: #f2f2f2;
    background: #f2f2f2;
    color: #222;
}

/* Workspace */
.workspace {
    display: flex;
    flex: 1;
    min-height: 0;
    padding-top: 2px;
    background: #2e2e2e;
}

.tools {
    display: flex;
    flex-direction: column;
    align-items: center;
    width: 35px;
    margin-right: 2px;
    padding: 4px 0 14px;
    background: #0f0f0f;
}

.tool-group {
    display: flex;
    flex-direction: column;
    gap: 1px;
    padding: 5px 0 4px;
    border-top: 1px solid #333;
}

.tool-group.first {
    height: 206px;
    justify-content: space-between;
    padding: 0 0 4px;
    border: 0;
}

.icon.on {
    background: #333;
}

.icon.favourite {
    width: 23px;
    height: 23px;
    margin-top: auto;
    background: #f2f2f2;
    color: #222;
}

/* Chart */
.chart {
    display: flex;
    flex: 1;
    flex-direction: column;
    min-width: 0;
}

.plot-row {
    position: relative;
    display: flex;
    flex: 1;
    min-height: 0;
    background: #989ba5;
}

.plot {
    position: relative;
    flex: 1;
    min-width: 0;
}

.drawings {
    position: absolute;
    width: 100%;
    height: 100%;
}

.stroke {
    stroke: #fff;
}

.hand {
    stroke-width: 1.5;
    stroke-linecap: round;
}

.red-line {
    stroke: #b8283f;
}

.crosshair {
    stroke: #63656b;
    stroke-dasharray: 1 2;
}

.crosshair.faint {
    stroke: #82858d;
}

.zone {
    fill: rgba(92, 93, 91, 0.55);
    stroke: #ececec;
}

.handles {
    fill: #8b93c4;
    stroke: #2a3fae;
    stroke-width: 1.5;
}

.legend {
    position: relative;
    padding: 3px 6px;
}

.legend h1 {
    display: flex;
    align-items: center;
    gap: 3px;
    margin: 0 0 3px;
    color: #fff;
    font-size: 11px;
    font-weight: 500;
    line-height: 15px;
}

.legend .flag {
    margin-left: 5px;
}

.status {
    width: 5px;
    height: 5px;
    margin-left: 9px;
    border-radius: 50%;
    background: #16a173;
    box-shadow: 0 0 0 3px #8b9f9f;
}

.quotes {
    display: flex;
    align-items: center;
    color: #222;
    font-size: 7px;
}

.quotes span {
    width: 22px;
    text-align: center;
}

.quote {
    width: 45px;
    height: 22px;
    border: 1px solid #c22748;
    border-radius: 4px;
    background: #fff;
    color: #c22748;
    line-height: 9px;
}

.quote b {
    display: block;
    font-size: 9px;
}

.quote sup {
    font-size: 7px;
    line-height: 0;
    vertical-align: 1px;
}

.quote.buy {
    width: 48px;
    border-color: #3149c9;
    color: #3149c9;
}

.floating {
    position: absolute;
    display: flex;
    align-items: center;
    height: 25px;
    border-radius: 4px;
    background: #1c1c1c;
    box-shadow: 0 1px 3px rgba(0, 0, 0, 0.5);
}

.grip {
    color: #555;
}

.edit-bar {
    top: 52px;
    left: 10px;
    padding-right: 1px;
}

.edit-bar svg {
    width: 17px;
    height: 17px;
}

.ink::after {
    content: "";
    position: absolute;
    bottom: 4px;
    width: 15px;
    height: 3px;
    border-radius: 1px;
    background: #fff;
}

.ink.black::after {
    background: #000;
}

.width {
    display: flex;
    align-items: center;
    gap: 5px;
    width: 46px;
    padding-left: 6px;
    font-size: 9px;
    font-weight: bold;
}

.width::before {
    content: "";
    width: 13px;
    height: 1px;
    background: currentColor;
}

.draw-bar {
    top: -2px;
    right: 37px;
    width: 522px;
}

.draw-bar .icon {
    flex: 1;
    min-width: 0;
}

.draw-bar .grip {
    width: 15px;
}

.zoom-bar {
    position: absolute;
    bottom: 21px;
    left: 470px;
    display: flex;
    gap: 5px;
}

.zoom-bar .icon {
    width: 16px;
    height: 16px;
    border-radius: 3px;
    background: #2a2b2d;
    color: #eee;
}

.zoom-bar svg {
    width: 15px;
    height: 15px;
    stroke-width: 1.5;
}

.zoom-bar .apart {
    margin-left: 6px;
}

.event {
    position: absolute;
    bottom: 0;
    left: 517px;
    width: 16px;
    height: 16px;
    stroke: none;
}

.logo {
    position: absolute;
    bottom: 7px;
    left: 7px;
    width: 24px;
    height: 14px;
}

.add-price {
    position: absolute;
    top: 200px;
    right: 0;
    width: 14px;
    height: 14px;
    border-radius: 0;
    background: #0f0f0f;
    color: #fff;
}

.add-price svg {
    width: 16px;
    height: 16px;
}

.price-axis {
    position: relative;
    display: flex;
    flex-direction: column;
    justify-content: space-between;
    width: 41px;
    padding: 23px 6px 0 5px;
    border-left: 1px solid #3c3d42;
    color: #fff;
    font-size: 8px;
    font-weight: bold;
    line-height: 10px;
}

.price-axis > span {
    position: relative;
}

.price-axis > .tint {
    position: absolute;
    top: 183px;
    right: 0;
    left: 0;
    height: 200px;
    background: #7f87b3;
}

.price-tag {
    position: absolute;
    right: 3px;
    left: 0;
    padding-left: 5px;
    background: #2859ee;
    line-height: 11px;
}

.price-tag.top {
    top: 178px;
}

.price-tag.bottom {
    top: 378px;
}

.price-tag.cursor {
    top: 201px;
    background: #0f0f0f;
    line-height: 13px;
}

.currency {
    position: absolute;
    top: 2px;
    right: 2px;
    display: flex;
    align-items: center;
    width: 38px;
    height: 18px;
    border-radius: 3px;
    background: #fff;
    color: #222;
}

.currency select {
    width: 100%;
    height: 18px;
    padding-left: 4px;
    appearance: none;
    font-weight: normal;
}

.currency svg {
    position: absolute;
    right: 0;
    width: 12px;
    height: 12px;
    pointer-events: none;
}

.time-row {
    display: flex;
    height: 19px;
    border-top: 1px solid #3c3d42;
    background: #989ba5;
}

/* Each column ends at the tick of its label */
.time-axis {
    position: relative;
    display: grid;
    flex: 1;
    grid-template-columns: 41fr repeat(7, 58fr) 349fr 39fr 38fr 39fr 58fr 58fr 7fr;
    align-items: center;
    color: #fff;
    font-size: 8px;
    font-weight: bold;
}

.time-axis > span {
    min-width: 0;
    justify-self: end;
    transform: translateX(50%);
}

.time-tags {
    position: absolute;
    top: 0;
    left: 490px;
    display: flex;
    line-height: 16px;
}

.time-tags b {
    padding: 0 5px;
    background: #2f5cf0;
    white-space: nowrap;
}

.time-tags .between {
    width: 33px;
    background: #7d87b8;
}

.time-tags .cursor {
    background: #0f0f0f;
}

.axis-settings {
    width: 41px;
    height: 18px;
    border-left: 1px solid #3c3d42;
    border-radius: 0;
    color: #333;
}

.axis-settings svg {
    width: 11px;
    height: 11px;
}

.ranges {
    display: flex;
    align-items: center;
    height: 26px;
    padding: 0 6px;
    background: #0f0f0f;
    font-size: 9px;
}

.ranges button {
    padding: 0 3px;
}

.ranges .sep {
    margin: 0 3px 0 6px;
}

.ranges .clock {
    margin-left: auto;
    padding: 0;
}

/* Watchlist */
.watchlist {
    position: relative;
    display: flex;
    flex-direction: column;
    width: 133px;
    margin: 0 1px 0 3px;
    background: #0f0f0f;
}

.list-head {
    display: flex;
    align-items: center;
    height: 31px;
    padding: 0 5px 0 10px;
}

.list-head b {
    margin-left: 5px;
}

.list-head .icon.small {
    margin-right: auto;
}

.list-switch {
    display: flex;
    height: 23px;
    padding: 4px 0 0 8px;
}

.list-switch .flag {
    width: 8px;
    height: 8px;
}

table {
    width: 100%;
    border-collapse: collapse;
    font-size: 9px;
}

th {
    height: 20px;
    padding: 2px 0 0 10px;
    border-bottom: 1px solid #2e2e2e;
    color: #8c8c8c;
    font-weight: normal;
    text-align: left;
}

th:last-child,
td:last-child {
    padding-right: 10px;
    text-align: right;
}

td {
    height: 20px;
    padding: 0;
    border-bottom: 1px solid #2e2e2e;
}

td div {
    display: flex;
    align-items: center;
    gap: 3px;
}

td .flag {
    height: 10px;
}

.group td {
    height: 23px;
    padding: 4px 0 0 8px;
    border: 0;
    color: #8c8c8c;
    font-size: 7px;
}

.group svg {
    width: 16px;
    height: 14px;
}

.group.pro td {
    height: 29px;
    padding-top: 8px;
    border-bottom: 1px solid #2e2e2e;
}

.selected {
    outline: 1px solid #a8a8a0;
    outline-offset: -1px;
    border-radius: 3px;
}

.collapse {
    position: absolute;
    bottom: 40px;
    left: -1px;
    width: 5px;
    height: 15px;
    overflow: hidden;
    border: 1px solid #333;
}

.collapse svg {
    width: 9px;
    height: 13px;
    margin-left: -3px;
}

.details {
    display: flex;
    align-items: center;
    height: 34px;
    margin-top: auto;
    padding: 0 5px 0 10px;
    border-top: 2px solid #2e2e2e;
}

.coin.large {
    width: 17px;
    height: 17px;
}

.details b {
    margin: 0 auto 0 5px;
}

/* Right rail */
.rail {
    display: flex;
    flex-direction: column;
    align-items: center;
    gap: 6px;
    width: 30px;
    padding: 4px 0;
    background: #0f0f0f;
}

.rail .lower {
    margin-top: auto;
}

.rail .badge {
    top: 0;
    right: 0;
}

.rail .all {
    height: 23px;
    width: 23px;
    border-radius: 50%;
    background: #f2f2f2;
    color: #222;
}

.rail .all svg {
    width: 14px;
    height: 14px;
}

.rail-line {
    width: 22px;
    height: 2px;
    background: #2e2e2e;
}
```
